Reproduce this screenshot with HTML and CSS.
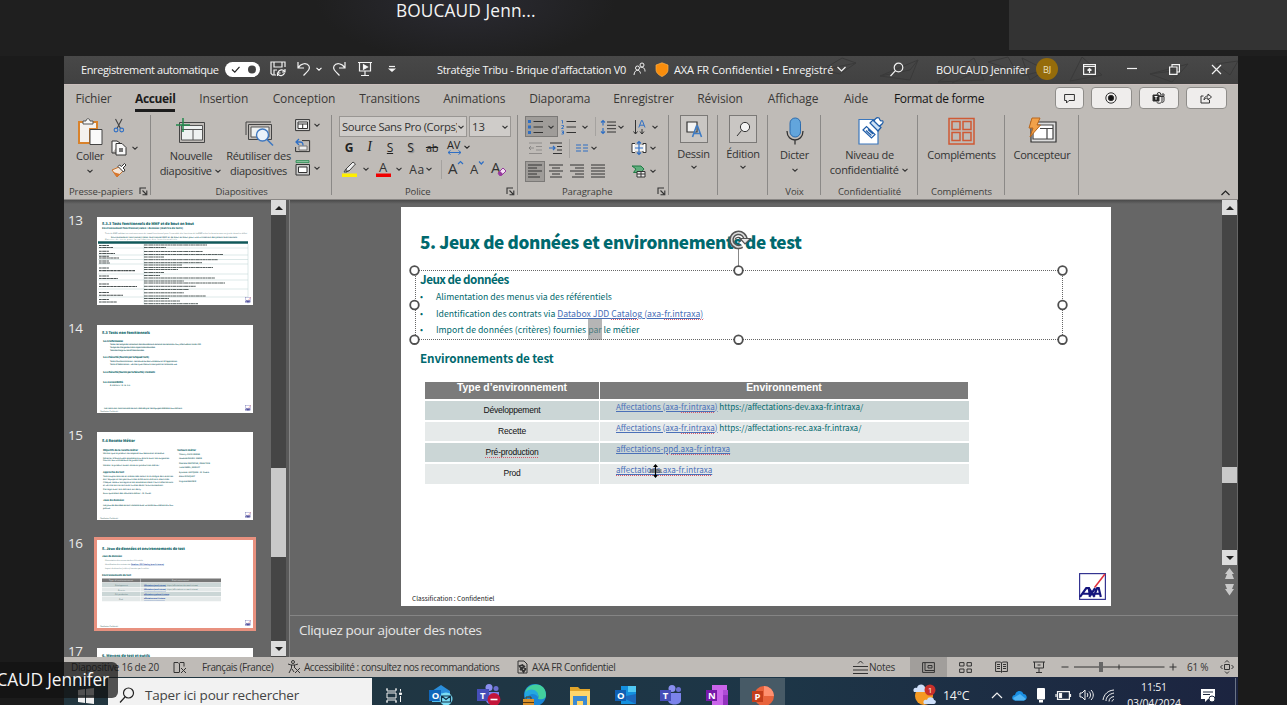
FILE: index.html
```html
<!DOCTYPE html>
<html lang="fr">
<head>
<meta charset="utf-8">
<title>Stratégie Tribu - Brique d'affactation V0</title>
<link rel="stylesheet" href="styles.css">
</head>
<body>
<svg class="defs" width="0" height="0">
  <symbol id="chev" viewBox="0 0 8 8"><path d="M1.5 2.8 4 5.2 6.5 2.8" fill="none" stroke="currentColor" stroke-width="1.1"/></symbol>
  <symbol id="launch" viewBox="0 0 9 9"><path d="M1 7V1h6M3.5 3.5 7 7M7.8 3.5v4.3H3.5" fill="none" stroke="#333" stroke-width="1.1"/></symbol>
  <symbol id="axa" viewBox="0 0 26 26"><rect x=".6" y=".6" width="24.8" height="24.8" fill="#fff" stroke="#2b2b8c" stroke-width="1.1"/><path d="M25 1 15 14" stroke="#e0303c" stroke-width="1.5"/><path d="M1 23 7 14.500h2.500L10.500 23M4 20h6M9.500 14.500 15 23M15.500 14.500 10 23M14 23l3.500-8.500H19L21 23M15 20h5.500" fill="none" stroke="#14147c" stroke-width="2.100"/></symbol>
</svg>

<header class="call"><div class="call-name">BOUCAUD Jenn...</div><div class="call-tile"></div></header>

<div class="app">
  <div class="titlebar">
    <svg class="pattern" viewBox="0 0 420 28"><path d="M2 14 22 2l14 5-16 11zM2 14l34-7M60 20 98 4 90 24zM60 20l30-6 8-10M118 26l36-24 10 22zM132 27l32-15M168 6l20-5 8 14zM202 2l24 12-16 10zM226 14l-24 6M250 25l12-24 20 18zM330 18l38-10-16 18zM330 18l30-4M396 8l22-3-8 14z" fill="none" stroke="#3a3a3a"/></svg>
    <span class="t-auto">Enregistrement automatique</span>
    <svg width="35" height="15" viewBox="0 0 35 15"><rect width="35" height="15" rx="7.500" fill="#fff"/><path d="m7 7.500 2.800 2.700L14.500 4.800" fill="none" stroke="#222" stroke-width="1.200"/><circle cx="27" cy="7.500" r="4" fill="#444"/></svg>
    <svg width="16" height="16" viewBox="0 0 16 16" class="w"><path d="M6 14H2.500L1 12.500V1h14v5M4 1v5h8V1M4 14V9h3M15 8v3h-3M7.500 15v-3h3M8 11.500c1-3 5-3.500 6.500-1M14.500 12c-1 3-5 3.500-6.500 1"/></svg>
    <svg width="16" height="16" viewBox="0 0 16 16" class="w"><path d="M2 1v6h6M2.300 6.700C5 2 11 1.500 13 5c1.500 3-1 5-5.500 9.500"/></svg>
    <svg width="8" height="8" class="cw"><use href="#chev"/></svg>
    <svg width="16" height="16" viewBox="0 0 16 16" class="w"><path d="M14 1v6H8M13.700 6.700C11 2 5 1.500 3 5c-1.500 3 1 5 5.500 9.500"/></svg>
    <svg width="16" height="16" viewBox="0 0 16 16" class="w"><path d="M1 1.500h14M2.500 2v8h11V2M8 10v4.500M4 14.500h8"/><path d="m6.500 3.800 4 2.200-4 2.200z" fill="#fff"/></svg>
    <svg width="8" height="8" viewBox="0 0 8 8" class="w"><path d="M1 1.500h6"/><path d="m1.500 4 2.500 2.300L6.500 4z" fill="#fff"/></svg>
    <span></span>
    <span class="t-doc">Stratégie Tribu - Brique d'affactation V0</span>
    <svg width="13" height="14" viewBox="0 0 13 14" class="w thin"><circle cx="4.500" cy="6" r="2"/><path d="M1 13c.3-6 6-6 6.500-1.500"/><circle cx="9" cy="3" r="2"/><path d="M7.500 5.500C10 5 12 6 12 9.500"/></svg>
    <svg width="14" height="15" viewBox="0 0 14 15"><path d="M7 .8 13 3v4.500c0 3.500-3 5.700-6 7-3-1.300-6-3.500-6-7V3z" fill="#f98d0c" stroke="#fbb04c" stroke-width=".7"/></svg>
    <span class="t-conf">AXA FR Confidentiel • Enregistré</span>
    <svg width="11" height="8" viewBox="0 0 11 8" class="w"><path d="m1.500 2 4 4 4-4"/></svg>
    <span></span>
    <svg width="14" height="15" viewBox="0 0 14 15" class="w"><circle cx="8.500" cy="5.500" r="4.300"/><path d="m5.500 8.700-5 5.300"/></svg>
    <span></span>
    <span class="t-user">BOUCAUD Jennifer</span>
    <span class="avatar">BJ</span>
    <svg width="13" height="11" viewBox="0 0 13 11" class="w"><path d="M.6.600h11.800v9.800H.6zM1 2.500h11M6.500 9V4.500M4.500 6.500l2-2 2 2"/></svg>
    <svg width="10" height="4" viewBox="0 0 10 4" class="w"><path d="M0 1.500h10"/></svg>
    <svg width="11" height="11" viewBox="0 0 11 11" class="w"><path d="M.6 3h7.400v7.400H.6zM3 2.500V.600h7.400V8H8.500"/></svg>
    <svg width="11" height="11" viewBox="0 0 11 11" class="w"><path d="m1 1 9 9M10 1l-9 9"/></svg>
  </div>

  <nav class="tabs">
    <span>Fichier</span><span class="on"><b>Accueil</b></span><span>Insertion</span><span>Conception</span><span>Transitions</span><span>Animations</span><span>Diaporama</span><span>Enregistrer</span><span>Révision</span><span>Affichage</span><span>Aide</span><span class="fmt">Format de forme</span>
    <div class="tab-btns">
      <i class="tb s"><svg width="11" height="11" viewBox="0 0 11 11" class="k"><path d="M.6 1.500h9.800v6H5L2.500 10V7.500H.6z"/></svg></i>
      <i class="tb"><svg width="12" height="12" viewBox="0 0 12 12" class="k"><circle cx="6" cy="6" r="5.200"/><circle cx="6" cy="6" r="2.700" fill="#111"/></svg></i>
      <i class="tb"><svg width="13" height="12" viewBox="0 0 13 12" class="k"><circle cx="7" cy="2.300" r="1.800"/><circle cx="11" cy="3" r="1.200"/><path d="M8 4.500h4v4c0 2-2 2-2 2M6 4.500h4V9c0 2.500-4 3-5.500 1"/><path d="M1 3h6v6H1z" fill="#222"/><path d="M2.500 4.500h3M4 4.500v3.300" stroke="#fff"/></svg></i>
      <i class="tb"><svg width="12" height="12" viewBox="0 0 12 12" class="k"><path d="M3.500 4H1v7h8.500V8M4 8c0-3 2-4 4-4V2l3.500 3L8 8V6C6 6 5 6.500 4 8z"/></svg></i>
    </div>
  </nav>

  <div class="ribbon">
    <section class="g g-clip">
      <div class="body">
        <div class="big"><svg width="26" height="28" viewBox="0 0 26 28"><path d="M2 4h18v7h-7v14H2z" fill="#f4f1ee" stroke="#d9822b" stroke-width="2"/><path d="M6 6V3h3c0-3 4-3 4 0h3v3z" fill="#f6f6f6" stroke="#555"/><path d="M13 11.500h12v15H13z" fill="#fafafa" stroke="#444"/></svg><span>Coller</span><svg width="8" height="8"><use href="#chev"/></svg></div>
        <div class="col c3">
          <svg class="cut" width="12" height="15" viewBox="0 0 12 15"><path d="m2.500 1 5 9.500M9 1 4 10.500" stroke="#444" stroke-width="1.100" fill="none"/><circle cx="3" cy="12" r="1.900" fill="none" stroke="#2f6fc4" stroke-width="1.100"/><circle cx="8.700" cy="12" r="1.900" fill="none" stroke="#2f6fc4" stroke-width="1.100"/></svg>
          <span class="rw"><svg width="16" height="16" viewBox="0 0 16 16"><path d="M1 13V1h5l3 2M1 13h4M5 3.500h6l4 4V15H5z" fill="#f8f8f8" stroke="#333"/><path d="M8 8h4v4H8z" fill="#777"/></svg><svg width="8" height="8"><use href="#chev"/></svg></span>
          <svg width="16" height="15" viewBox="0 0 16 15"><path d="m1 7 5 7 6-6-4-4z" fill="#f5e6d8" stroke="#c9722a"/><path d="m2 9 4 5 3-3z" fill="#d9762b"/><path d="m7 3.500 5.500 5.500 1.500-2-2-2 3-3-1.500-1.500-3 3-2-1.500z" fill="#fff" stroke="#333"/></svg>
        </div>
      </div>
      <footer>Presse-papiers<svg width="9" height="9"><use href="#launch"/></svg></footer>
    </section>
    <section class="g g-slides">
      <div class="body">
        <div class="big"><svg width="30" height="28" viewBox="0 0 30 28"><path d="M3.500 4.500h25v20h-25z" fill="none" stroke="#444"/><path d="M5.500 7.500h21v14.500h-21z" fill="#eef1f1" stroke="#555"/><path d="M5.500 11.500h21M17 11.500v10.500" stroke="#555"/><path d="M7 0v14M0 7h14" stroke="#23894d" stroke-width="1.500"/></svg><span>Nouvelle<br>diapositive <svg width="8" height="8"><use href="#chev"/></svg></span></div>
        <div class="big"><svg width="30" height="28" viewBox="0 0 30 28"><path d="M2 17V4h25M4.500 6.500h23v15h-23z" fill="none" stroke="#444"/><path d="M7 9h18v10H7z" fill="#eef1f1" stroke="#555"/><circle cx="18.500" cy="17" r="6" fill="#eaf2fa" stroke="#3f78c0" stroke-width="1.400"/><path d="m23 21.500 6 6" stroke="#3f78c0" stroke-width="1.600"/></svg><span>Réutiliser des<br>diapositives</span></div>
        <div class="col c3">
          <span class="rw"><svg width="16" height="14" viewBox="0 0 16 14"><path d="M.6 1.600h14v11h-14z" fill="#ddd" stroke="#333"/><path d="M3 4h9.500v6.500H3zM3 6h9.500M7.700 6v4.500" fill="#fff" stroke="#333"/></svg><svg width="8" height="8"><use href="#chev"/></svg></span>
          <svg width="16" height="14" viewBox="0 0 16 14"><path d="M7 1.600h7.600v11h-14V8" fill="none" stroke="#333"/><path d="M4 7h8v4H4z" fill="#eee" stroke="#777"/><path d="M4 0 1 3l3 3M1 3h4c2.500 0 3 1.500 3 3.500" fill="none" stroke="#2f6fc4" stroke-width="1.300"/></svg>
          <span class="rw"><svg width="16" height="16" viewBox="0 0 16 16"><path d="M1 .6h13v2H1z" fill="#8fc5a3" stroke="#23894d" stroke-width=".8"/><path d="M1 4.500h13.500v10.500H1z" fill="#ccc" stroke="#333"/><path d="M3.500 7h8.500v5.500H3.500z" fill="#fff" stroke="#333"/></svg><svg width="8" height="8"><use href="#chev"/></svg></span>
        </div>
      </div>
      <footer>Diapositives</footer>
    </section>
    <section class="g g-font">
      <div class="boxes"><span class="box"><em>Source Sans Pro (Corps)</em><svg width="8" height="8"><use href="#chev"/></svg></span><span class="box"><em>13</em><svg width="8" height="8"><use href="#chev"/></svg></span></div>
      <div class="f2"><b>G</b><i class="it">I</i><u>S</u><span class="sh">S</span><s>ab</s><span class="rw"><svg width="15" height="16" viewBox="0 0 15 16"><text x="0" y="10" class="av">AV</text><path d="M1 13.500h13M3.500 11.500l-2.500 2 2.500 2M11.500 11.500l2.500 2-2.500 2" fill="none" stroke="#2f6fc4"/></svg><svg width="8" height="8"><use href="#chev"/></svg></span></div>
      <div class="f3">
        <svg width="15" height="16" viewBox="0 0 15 16"><path d="m4 8 7-7 2.500 2L7 10l-3 .5zM4 8l-2 3h3l1.500-1.500" fill="#eee" stroke="#444"/><path d="M0 12.500h15V16H0z" fill="#ffef00"/></svg><svg width="8" height="8"><use href="#chev"/></svg>
        <svg width="15" height="16" viewBox="0 0 15 16"><text x="3" y="11" class="ga">A</text><path d="M0 12.500h15V16H0z" fill="#f00000"/></svg><svg width="8" height="8"><use href="#chev"/></svg>
        <span class="aa">Aa<svg width="8" height="8"><use href="#chev"/></svg></span><i class="vs"></i>
        <svg width="15" height="16" viewBox="0 0 15 16"><text x="0" y="13" class="gl">A</text><path d="m10 3 2.500-2.500L15 3" fill="none" stroke="#2f6fc4" stroke-width="1.200"/></svg>
        <svg width="15" height="16" viewBox="0 0 15 16"><text x="1" y="13" class="gm">A</text><path d="m10 .5 2.300 2.500 2.300-2.500" fill="none" stroke="#2f6fc4" stroke-width="1.200"/></svg>
        <svg width="16" height="16" viewBox="0 0 16 16"><text x="0" y="12" class="gl">A</text><path d="m7 12 5-5 3 3-4.500 4.500H8.500z" fill="#f2dcf2" stroke="#963a9c"/><path d="m7 12 2-2 3 3-1.500 1.500h-2z" fill="#963a9c"/></svg>
      </div>
      <footer>Police<svg width="9" height="9"><use href="#launch"/></svg></footer>
    </section>
    <section class="g g-para">
      <div class="p1">
        <span class="hl"><svg width="15" height="16" viewBox="0 0 15 16"><path d="M5.500 2.500H15M5.500 8H15M5.500 13.500H15" stroke="#333" stroke-width="1.100"/><path d="M0 1h3v3H0zM0 6.500h3v3H0zM0 12h3v3H0z" fill="#2f6fc4"/></svg><svg width="8" height="8"><use href="#chev"/></svg></span>
        <svg width="15" height="16" viewBox="0 0 15 16"><path d="M5.500 2.500H15M5.500 8H15M5.500 13.500H15" stroke="#333"/><path d="M.5 1.500h1v3M.5 6.500h2v1.500L.5 9.500h2M.5 12h2v3h-2M1 13.500h1.500" fill="none" stroke="#2f6fc4" stroke-width=".9"/></svg><svg width="8" height="8"><use href="#chev"/></svg><i class="vs"></i>
        <svg width="16" height="16" viewBox="0 0 16 16"><path d="M7 3h9M7 6.300h9M7 9.700h9M7 13h9" stroke="#333"/><path d="M3 1.500v5M1 3.500l2-2 2 2M3 9v5.500M1 12.500l2 2 2-2" fill="none" stroke="#2f6fc4" stroke-width="1.200"/></svg><svg width="8" height="8"><use href="#chev"/></svg>
        <svg width="13" height="16" viewBox="0 0 13 16"><path d="M2.500 1v14M.5 12.500l2 2.500 2-2.500M9 10v5M7 12.500l2 2.500 2-2.500" fill="none" stroke="#333"/><path d="m5.800 8.500 2.700-7h.8l2.700 7M6.800 6.200h4.200" fill="none" stroke="#2f6fc4"/></svg><svg width="8" height="8"><use href="#chev"/></svg>
      </div>
      <div class="p2">
        <svg width="15" height="12" viewBox="0 0 15 12" opacity=".45"><path d="M1 1h13M8 4.500h6M8 8h6M1 11.500h13M6 6H1M3 4 1 6l2 2" fill="none" stroke="#555"/></svg>
        <svg width="14" height="12" viewBox="0 0 14 12"><path d="M1 1h12M8 4.500h5M8 8h5M4 11.500h9" stroke="#333"/><path d="M0 6h6M4 4l2 2-2 2" fill="none" stroke="#2f6fc4" stroke-width="1.200"/></svg><i class="vs"></i>
        <svg width="12" height="8" viewBox="0 0 12 8"><path d="M0 1h5M7 1h5M0 4h5M7 4h5M0 7h5M7 7h5" stroke="#2f6fc4" stroke-width="1.200"/></svg><svg width="8" height="8"><use href="#chev"/></svg><span></span>
        <svg width="16" height="14" viewBox="0 0 16 14"><path d="M4 2.500H1v9h3M12 2.500h3v9h-3z" fill="#fff" stroke="#333"/><path d="M3 4h10v6H3z" fill="#eee"/><path d="M8 0v14M6 2.500 8 .5l2 2M6 11.500l2 2 2-2M4 7h8" fill="none" stroke="#2f6fc4" stroke-width="1.200"/></svg><svg width="8" height="8"><use href="#chev"/></svg>
      </div>
      <div class="p3">
        <span class="hl"><svg width="14" height="14" viewBox="0 0 14 14" class="k"><path d="M0 1h14M0 4h9M0 7h14M0 10h9M0 13h12"/></svg></span>
        <svg width="14" height="14" viewBox="0 0 14 14" class="k"><path d="M0 1h14M3 4h8M0 7h14M3 10h8M1 13h12"/></svg>
        <svg width="14" height="14" viewBox="0 0 14 14" class="k"><path d="M0 1h14M5 4h9M0 7h14M5 10h9M2 13h12"/></svg>
        <svg width="14" height="14" viewBox="0 0 14 14" class="k"><path d="M0 1h14M0 4h14M0 7h14M0 10h14M0 13h14"/></svg><span></span>
        <svg width="16" height="13" viewBox="0 0 16 13"><path d="M1 1h9l3 3-3 3.500H2.500L5 4z" fill="#5fae7d" stroke="#1f7a44"/><path d="M6 6.500h8V12H6z" fill="#eee" stroke="#333"/><path d="M6 9h8M10 6.500V12" stroke="#333"/></svg><svg width="8" height="8"><use href="#chev"/></svg>
      </div>
      <footer>Paragraphe<svg width="9" height="9"><use href="#launch"/></svg></footer>
    </section>
    <section class="g g-box"><div class="sq"><svg width="16" height="17" viewBox="0 0 16 17"><path d="M1 1h10v10H1z" fill="#f3f3f3" stroke="#333" stroke-width="1.200"/><path d="m6.500 16 4-11h1l4 11M8 12.500h6" fill="none" stroke="#3f7cc4" stroke-width="1.600"/></svg></div><span>Dessin</span><svg width="8" height="8"><use href="#chev"/></svg></section>
    <section class="g g-box"><div class="sq"><svg width="15" height="16" viewBox="0 0 15 16" class="k"><circle cx="9" cy="6" r="4.600" fill="#f3f3f3"/><path d="M5.500 9.500 1 15"/></svg></div><span>Édition</span><svg width="8" height="8"><use href="#chev"/></svg></section>
    <section class="g g-one"><div class="big"><svg width="20" height="28" viewBox="0 0 20 28"><path d="M2 14c0 12 16 12 16 0M10 23v4.500" fill="none" stroke="#333" stroke-width="1.300"/><rect x="5" y="1" width="10.500" height="19" rx="5.200" fill="#62a5dc" stroke="#2c6cae"/></svg><span>Dicter</span><svg width="8" height="8"><use href="#chev"/></svg></div><footer>Voix</footer></section>
    <section class="g g-one"><div class="big"><svg width="28" height="28" viewBox="0 0 28 28"><path d="M3 2.500h19v24.500H3z" fill="#fff" stroke="#3b77bd" stroke-width="1.200"/><path d="m7 13 3.500-3.500 8.500 8L15.500 21zM10 13.500l5.500 5M12 12.500l5 4.500" fill="#fff" stroke="#1f5da8" stroke-width="1.200"/><path d="m14 6 3-3 8 7.500-3 3.500z" fill="#cfe2f5" stroke="#1f5da8" stroke-width="1.200"/><path d="M18 4c1-2 3-4 5-3 1 1 0 2 2 3 2-1 3 1 1 3-1 1-2 2-3 2z" fill="#fff" stroke="#1f5da8" stroke-width="1.200"/></svg><span>Niveau de<br>confidentialité <svg width="8" height="8"><use href="#chev"/></svg></span></div><footer>Confidentialité</footer></section>
    <section class="g g-one"><div class="big"><svg width="27" height="28" viewBox="0 0 27 28"><path d="M1 1.500h25v25.500H1zM4 4.500h8v8H4zM15 4.500h8v8h-8zM4 15.500h8v8H4zM15 15.500h8v8h-8z" fill="none" stroke="#cf5a35" stroke-width="1.500"/></svg><span>Compléments</span></div><footer>Compléments</footer></section>
    <section class="g g-one"><div class="big"><svg width="29" height="28" viewBox="0 0 29 28"><path d="M3 5h25v20H3z" fill="#ddd" stroke="#333" stroke-width="1.200"/><path d="M5 8h20v14H5zM12 11.500h13M19 11.500V22" fill="#fff" stroke="#444" stroke-width="1.200"/><path d="M4 1h8L9 8h3.500L2 20l3-9H1z" fill="#f1a14a" stroke="#b9661c"/></svg><span>Concepteur</span></div></section>
    <svg class="collapse" width="11" height="8" viewBox="0 0 11 8"><path d="m1.500 6 4-4 4 4" fill="none" stroke="#222" stroke-width="1.200"/></svg>
  </div>

  <div class="work">
    <aside class="thumbs">
      <div class="row"><span>13</span><svg class="th" viewBox="0 0 156 88">
        <text x="5" y="7.500" class="h" textLength="92">5.3.3 Tests fonctionnels de MMF et de bout en bout</text>
        <text x="5" y="11.500" class="sb" textLength="81">Environnement fonctionnel/Jalon : données (matrice de tests)</text>
        <text x="8" y="16.500" class="m" textLength="142">Tests de MMF validant un environnement de travail fonctionnel pour l'ensemble des fonctions de la MMF selon les besoins avec un jeu de données défini</text>
        <text x="14" y="20.500" class="mb" textLength="126">Environnement fonctionnel/Jalon fonctionnel MMF et de bout en bout pour une utilisation des jalons fonctionnels</text>
        <text x="8" y="23" class="m" textLength="72">Matrice de tests pour la validation des fonctionnalités</text>
        <path d="M1 24.200h150v2.500H1z" fill="#10585a"/>
        <path d="M1 31h150M1 38h150M1 42.500h150M1 47h150M1 57h150M1 63h150M1 72h150M1 80h150" stroke="#b9d0d0" stroke-width=".5"/>
        <path d="M47 27v60M151 27v60" stroke="#b9d0d0" stroke-width=".5"/>
        <path d="M2 28.500h10M2 30.500h14M2 34.300h10M2 36.500h16M2 39.300h10M2 41h20M2 44h10M2 46h11M2 51h10M2 53.600h36M2 59h10M2 61.500h19M2 67h10M2 69.500h38M2 75.500h10M2 78.300h24M2 82.500h10M2 85h18" stroke="#4a5252" stroke-width="1.100" stroke-dasharray="2.500 .3 1 .2 3 .4"/>
        <path d="M47 28h63M47 30.500h22M47 34.500h59M47 37.500h79M47 40h20M47 42.700h74M47 45.700h58M47 48h38M47 50.500h69M47 52.500h34M47 55.500h20M47 58.500h16M47 61h71M47 64h40M47 66h81M47 69.300h52M47 72.500h45M47 75.800h40M47 79h62M47 81.500h25M47 84h36M47 86.700h54" stroke="#56605f" stroke-width="1" stroke-dasharray="3 .3 1.400 .3 4 .4 2 .3"/>
        <use href="#axa" x="148" y="80" width="6" height="6"/></svg></div>
      <div class="row"><span>14</span><svg class="th" viewBox="0 0 156 88">
        <text x="5" y="9" class="h" textLength="48">5.3 Tests non fonctionnels</text>
        <text x="6" y="16.500" class="sb" textLength="20">5.3.1 Performances</text>
        <text x="13" y="19.500" class="mb" textLength="91">Tester les temps de traitement des données entrantes et sortantes du flux, effectués en fin de JDD</text>
        <text x="13" y="22.500" class="mb" textLength="45">Temps de chargement des impacts des données</text>
        <text x="13" y="26" class="mb" textLength="34">Tests de charge sur les API des données</text>
        <text x="6" y="33" class="sb" textLength="46">5.3.2 Sécurité (fournis par la Squad Tech)</text>
        <text x="13" y="36.500" class="mb" textLength="67">Tests d'authentification : tentatives au bon utilisateur et à l'application</text>
        <text x="13" y="39.500" class="mb" textLength="67">Tests d'habilitation : vérifier que chacun a son profil et la bonne vue</text>
        <text x="6" y="47.500" class="sb" textLength="52">5.3.3 Sécurité (fournis par la Sécurité) : Pentests</text>
        <text x="6" y="58" class="sb" textLength="20">5.3.4 Accessibilité</text>
        <text x="13" y="61" class="mb" textLength="20">À définir à la fin</text>
        <text x="7" y="84" class="mb" textLength="78">Les tests non fonctionnels seront réalisés par les équipes dédiées aux métiers</text>
        <text x="3" y="87.300" class="m" textLength="18">Classification : Confidentiel</text>
        <use href="#axa" x="148" y="80" width="6" height="6"/></svg></div>
      <div class="row"><span>15</span><svg class="th" viewBox="0 0 156 88">
        <text x="5" y="9.500" class="h" textLength="33">5.4 Recette Métier</text>
        <text x="6" y="18.500" class="sb" textLength="35">Objectifs de la recette Métier</text><text x="80" y="18.500" class="sb" textLength="19">Testeurs métier</text>
        <g class="mb"><text x="6" y="22" textLength="61">Vérifier que le produit correspond aux besoins et attendus</text><text x="6" y="26.500" textLength="66">Détecter d'éventuels anomalies ou écarts avec les exigences</text><text x="6" y="29" textLength="40">Fournir aux utilisateurs le guide final</text><text x="6" y="33.500" textLength="56">Valider le produit avant mise en production métier</text>
        <text x="82" y="23" textLength="21">Thierry GUYE-BERNE</text><text x="82" y="27" textLength="23">Laurence DULIEU - MAGIE</text><text x="82" y="31.500" textLength="31">Pascale DESTEPHE, BEAUTEIN</text><text x="82" y="36" textLength="21">Julie GAREL, MERLOT</text><text x="82" y="40.500" textLength="30">Sylvaine JAYCQUES - M. Duero</text><text x="82" y="45" textLength="16">Alain BOUQUET</text><text x="82" y="49.500" textLength="17">Virginie MAUDER</text>
        <text x="6" y="45" textLength="70">Tests exploratoires et scénarisés selon la stratégie des recettes</text><text x="6" y="47.500" textLength="66">de l'équipe et les parcours des différents métiers identifiés</text><text x="6" y="51" textLength="70">Chaque testeur enregistre les anomalies dans l'outil affectations</text><text x="6" y="53.500" textLength="60">et vérifie les corrections livrées dans l'environnement</text><text x="6" y="58" textLength="38">Partage avec les métiers en daily</text><text x="6" y="61.500" textLength="48">Suivi quotidien des résultats métier - M. Durel</text><text x="6" y="73.500" textLength="70">Les jeux de données seront transmis avec un accès aux métiers du flux</text><text x="6" y="76.500" textLength="7">prévus</text></g>
        <text x="6" y="40.500" class="sb" textLength="21">Approche de test</text><text x="6" y="69" class="sb" textLength="21">Jeux de données</text>
        <text x="3" y="87.300" class="m" textLength="18">Classification : Confidentiel</text>
        <use href="#axa" x="148" y="80" width="6" height="6"/></svg></div>
      <div class="row sel"><span>16</span><svg class="th" viewBox="0 0 156 88">
        <text x="5" y="9.500" class="h" textLength="83">5. Jeux de données et environnements de test</text>
        <text x="5" y="17" class="sb" textLength="20">Jeux de données</text>
        <g class="m"><text x="8" y="21" textLength="38">Alimentation des menus via des référentiels</text><text x="8" y="24.700" textLength="25">Identification des contrats via</text><text x="34" y="24.700" class="l" textLength="33">Databox JDD Catalog (axa-fr.intraxa)</text><text x="8" y="28.500" textLength="44">Import de données (critères) fournies par le métier</text></g>
        <text x="5" y="35.500" class="sb" textLength="29">Environnements de test</text>
        <path d="M5 38.500h119v3.800H5z" fill="#777"/><path d="M5 42.800h119v4.200H5zM5 52h119v4H5z" fill="#cbd6d6"/><path d="M5 47.500h119v4H5zM5 56.500h119v4.700H5z" fill="#e3e8e8"/><path d="M43.500 38.500v23" stroke="#fff" stroke-width=".4"/>
        <g class="m"><text x="12" y="41.200" class="wt" textLength="24">Type d'environnement</text><text x="75" y="41.200" class="wt" textLength="17">Environnement</text><text x="18" y="46" textLength="13">Développement</text><text x="21" y="50.800" textLength="7">Recette</text><text x="18" y="55" textLength="13">Pré-production</text><text x="22" y="59.700" textLength="4">Prod</text><text x="47" y="45.500" class="l" textLength="22">Affectations (axa-fr.intraxa)</text><text x="70" y="45.500" textLength="31">https://affectations-dev.axa-fr.intraxa/</text><text x="47" y="50.200" class="l" textLength="22">Affectations (axa-fr.intraxa)</text><text x="70" y="50.200" textLength="31">https://affectations-rec.axa-fr.intraxa/</text><text x="47" y="54.700" class="l" textLength="25">affectations-ppd.axa-fr.intraxa</text><text x="47" y="59.400" class="l" textLength="21">affectations.axa-fr.intraxa</text>
        <text x="3" y="87.300" textLength="18">Classification : Confidentiel</text></g>
        <use href="#axa" x="148" y="80" width="6" height="6"/></svg></div>
      <div class="row"><span>17</span><svg class="th" viewBox="0 0 156 88"><text x="5" y="9" class="h" textLength="48">6. Moyens de test et outils</text></svg></div>
    </aside>
    <div class="sb1"><i class="ar up"></i><i class="thumb"></i><i class="ar dn"></i></div>
    <div class="split"></div>
    <main>
      <div class="stage">
        <article class="slide">
          <h1>5. Jeux de données et environnements de test</h1>
          <h2 class="jeux">Jeux de données</h2>
          <ul>
            <li>Alimentation des menus via des référentiels</li>
            <li>Identification des contrats via <a>Databox JDD <span class="sp">Catalog</span> (axa-<span class="sp">fr.intraxa)</span></a></li>
            <li>Import de données (critères) fournies <mark>par</mark> le métier</li>
          </ul>
          <h2 class="env">Environnements de test</h2>
          <table>
            <colgroup><col class="ca"><col></colgroup>
            <tr><th>Type d’environnement</th><th>Environnement</th></tr>
            <tr class="d"><td>Développement</td><td><a>Affectations (axa-<span class="sp">fr.intraxa</span>)</a> https://affectations-dev.axa-fr.intraxa/</td></tr>
            <tr><td>Recette</td><td><a>Affectations (axa-<span class="sp">fr.intraxa</span>)</a> https://affectations-rec.axa-fr.intraxa/</td></tr>
            <tr class="d"><td><span class="sp">Pré-production</span></td><td><a>affectations-<span class="sp">ppd.axa-fr.intraxa</span></a></td></tr>
            <tr><td>Prod</td><td><a><span class="sp">affectations.axa-fr.intraxa</span></a></td></tr>
          </table>
          <div class="class">Classification : Confidentiel</div>
          <svg class="logo" width="27" height="27"><use href="#axa"/></svg>
          <svg class="selbox" width="660" height="120" viewBox="408 228 660 120">
            <path d="M415 270.500h648M415 339.500h648M415.500 270v70M1062.500 270v70" fill="none" stroke="#666" stroke-width="1" stroke-dasharray="1 1"/>
            <path d="M738.500 248v18" stroke="#888"/>
            <g fill="#fff" stroke="#4f4f4f" stroke-width="1.800"><circle cx="414.500" cy="270.500" r="4.300"/><circle cx="738.500" cy="270.500" r="4.300"/><circle cx="1062.500" cy="270.500" r="4.300"/><circle cx="414.500" cy="305" r="4.300"/><circle cx="1062.500" cy="305" r="4.300"/><circle cx="414.500" cy="339.700" r="4.300"/><circle cx="738.500" cy="339.700" r="4.300"/><circle cx="1062.500" cy="339.700" r="4.300"/></g>
            <path d="M745.500 240a7 7 0 1 0-3.500 6" fill="none" stroke="#555" stroke-width="4.600"/><path d="M745.500 240a7 7 0 1 0-3.500 6" fill="none" stroke="#ddd" stroke-width="1.600"/>
            <path d="M740 238.500h10.500L745 244z" fill="#e9e9e9" stroke="#555" stroke-width="1.200"/><path d="M735 239.500c1-3 6-3 6 1l-2.500 2" fill="none" stroke="#555" stroke-width="1.300"/>
          </svg>
          <svg class="cursor" width="13" height="14" viewBox="0 0 13 14"><path d="M.5 6h12M.5 8h12" stroke="#333"/><path d="M6.500 1v12" stroke="#000" stroke-width="1.200"/><path d="m4 3 2.500-3L9 3zM4 11l2.500 3L9 11z"/></svg>
        </article>
        <div class="sb2"><i class="ar up"></i><i class="thumb"></i><i class="ar dn"></i><svg width="11" height="30" viewBox="0 0 11 30"><path d="M5.500 1 10 7H8l2 5H1l2-5H1zM5.500 28.500 10 22H8l2-5H1l2 5H1z" fill="#c9c9c9"/></svg></div>
      </div>
      <div class="notes">Cliquez pour ajouter des notes</div>
    </main>
  </div>

  <div class="status">
    <span>Diapositive 16 de 20</span>
    <svg width="14" height="13" viewBox="0 0 14 13" class="k"><path d="M6 11.500H1v-10h4l1 1 1-1h4v4M6.500 2.500v9M8 7l5 5M13 7l-5 5"/></svg>
    <span class="s2">Français (France)</span>
    <svg width="14" height="14" viewBox="0 0 14 14" class="k"><circle cx="6" cy="2" r="1.500"/><path d="M1 4c4 1.500 6 1.500 10 0M4.500 5v3L2 13M7.500 5v3M5 9l2 3M8 8l5 5M13 8l-5 5"/></svg>
    <span class="s3">Accessibilité : consultez nos recommandations</span>
    <svg width="11" height="14" viewBox="0 0 11 14" class="k"><path d="M1 1h6l3 3v9H1z"/><path d="m2.500 6 3-1 3 4-2 3zM3 10l5-4" stroke-width="1.800"/></svg>
    <span class="s4">AXA FR Confidentiel</span>
    <span></span>
    <svg width="15" height="15" viewBox="0 0 15 15" class="k"><path d="m5 3.500 2.500-2.500L10 3.500M0 6.500h15M0 10h15M0 13.500h15"/></svg>
    <span>Notes</span><span></span>
    <span class="cur"><svg width="13" height="11" viewBox="0 0 13 11" class="k"><path d="M.6.600h11.800v9.800H.6zM3 .6v7.900M3 8.500h9M6 3.500h4v2.500H6z"/></svg></span>
    <svg width="13" height="11" viewBox="0 0 13 11" class="k"><path d="M.6.600h4.400v3.400H.6zM8 .6h4.400v3.400H8zM.6 7h4.400v3.400H.6zM8 7h4.400v3.400H8z"/></svg>
    <svg width="13" height="12" viewBox="0 0 13 12" class="k"><path d="M.6 1h4.900l1 1 1-1h4.900v9.500H7.500l-1 1-1-1H.6zM6.500 2v9M2 3.500h3M2 5.500h3M2 7.500h3M8 3.500h3M8 5.500h3M8 7.500h3"/></svg>
    <svg width="12" height="12" viewBox="0 0 12 12" class="k"><path d="M0 1h12M1.500 1v6h9V1M6 7v4M3 11.500h6M4.500 4h3"/></svg>
    <svg class="zoom" width="120" height="14" viewBox="0 0 120 14"><path d="M4.500 7h7M17 7h90.500M62 4.500v5M112.500 7h7M116 3.500v7" stroke="#333"/><path d="M42 2h4v10h-4z" fill="#666"/></svg>
    <span>61 %</span>
    <svg width="14" height="14" viewBox="0 0 14 14" class="k"><path d="M4.500 4.500h5v5h-5zM5 2.500l2-2 2 2M5 11.500l2 2 2-2M2.500 5l-2 2 2 2M11.500 5l2 2-2 2"/></svg>
  </div>

  <div class="taskbar">
    <span class="start"><svg width="16" height="16" viewBox="0 0 16 16"><path d="M0 2 7 1v6.500H0zM8 .9 16 0v7.500H8zM0 8.500h7V15l-7-1zM8 8.500h8V16l-8-1z" fill="#f0f0f0"/></svg></span>
    <span class="search"><svg width="16" height="16" viewBox="0 0 16 16"><circle cx="9.500" cy="6" r="5" fill="none" stroke="#222" stroke-width="1.200"/><path d="m6 10-5 5.500" stroke="#222" stroke-width="1.200"/></svg><em>Taper ici pour rechercher</em></span>
    <svg width="16" height="15" viewBox="0 0 16 15" class="w thin"><path d="M0 1h2M9 1h2M0 14h2M9 14h2M1 1v2h9V1M1 14v-2h9v2M1 5h9v5H1zM14.500 1v2.500M14.500 8v6"/><path d="M13.500 5h2v1.500h-2z" fill="#fff"/></svg>
    <svg width="24" height="22" viewBox="0 0 24 22"><path d="M3 7 12 1l9 6v11H3z" fill="#2a8edb"/><path d="M3 9h18v9H3z" fill="#52c0f0"/><path d="M0 6h12v11H0z" fill="#0f66ba"/><text x="2.800" y="14.500" class="ic">O</text><circle cx="17" cy="15" r="6.500" fill="#7adcf5"/><path d="M12.500 12h9v6h-9zM12.500 12l4.500 3.500 4.500-3.500" fill="none" stroke="#12324a" stroke-width="1.200"/></svg>
    <svg width="24" height="22" viewBox="0 0 24 22"><circle cx="12" cy="3.500" r="3.500" fill="#8a8ff0"/><circle cx="19" cy="4.500" r="2.500" fill="#6a6fd0"/><path d="M9 8h13v8c0 6-13 6-13 0z" fill="#7b83eb"/><path d="M0 5h12v12H0z" fill="#464eb8"/><text x="3" y="14.500" class="ic">T</text><circle cx="17" cy="15.500" r="6.500" fill="#c4153a"/><path d="M13.500 15.500h7" stroke="#fff" stroke-width="1.600"/></svg>
    <svg width="24" height="22" viewBox="0 0 24 22"><circle cx="13" cy="11" r="11" fill="#1a86d8"/><path d="M3 9C5-2 24-3 24 11c0 4-4 5-8 4 3-6-6-9-13-6z" fill="#43cf9d"/><path d="M3 9c5-7 15-2 13 4-3-4-9-5-13 4z" fill="#24a7e0"/><path d="M1 15h11v8H1z" fill="#d9902a"/><path d="M4 15v-2h5v2M1 18.500h11" fill="none" stroke="#593a10"/></svg>
    <svg width="22" height="20" viewBox="0 0 22 20"><path d="M1 2h8l2 2h10v4H1z" fill="#e2a52a"/><path d="M1 6h20v14H1z" fill="#ffd66b"/><path d="M4 11h14v9h-4v-4H8v4H4z" fill="#3c8ad2"/></svg>
    <svg width="22" height="20" viewBox="0 0 22 20"><path d="M6 1h15v18H6z" fill="#1490df"/><path d="M13 1h8v6h-8z" fill="#50c8f3"/><path d="m6 12 15 7V9z" fill="#1c69bd"/><path d="M0 5h11v11H0z" fill="#0f5fb4"/><text x="2" y="14" class="ic">O</text></svg>
    <svg width="22" height="20" viewBox="0 0 22 20"><circle cx="12" cy="3.500" r="3.500" fill="#8a8ff0"/><circle cx="18.500" cy="4.500" r="2.500" fill="#6a6fd0"/><path d="M8 8h13v7c0 6-13 6-13 0z" fill="#7b83eb"/><path d="M0 5h11v11H0z" fill="#464eb8"/><text x="2.800" y="14" class="ic">T</text></svg>
    <svg width="22" height="20" viewBox="0 0 22 20"><path d="M6 0h15v20H6z" fill="#ca64ea"/><path d="M17 5h5v5h-5z" fill="#ae4bd5"/><path d="M17 10h5v10h-5z" fill="#9332bf"/><path d="M0 5h11v11H0z" fill="#7719aa"/><text x="2" y="14" class="ic">N</text></svg>
    <span class="pp"><svg width="22" height="20" viewBox="0 0 22 20"><circle cx="12" cy="10" r="10" fill="#e8633c"/><path d="M12 0a10 10 0 0 1 10 10H12z" fill="#ff9070"/><path d="M0 5h11v11H0z" fill="#c43e1c"/><text x="2.500" y="14" class="ic">P</text></svg></span>
    <span></span>
    <svg width="24" height="22" viewBox="0 0 24 22"><circle cx="11" cy="12" r="9" fill="#f59a23"/><path d="M1 8c-2-4 2-5 3-4 1-5 8-4 8 0 3 0 2 4 0 4z" fill="#cfe0fa"/><path d="M11 20c-2-4 2-5 3-4 1-4 7-3 7 0 3 0 2 4 0 4z" fill="#cfe0fa"/><circle cx="17" cy="6" r="5.500" fill="#c8302b"/><text x="15" y="9" class="n1">1</text></svg>
    <span class="temp">14°C</span>
    <svg width="12" height="8" viewBox="0 0 12 8" class="w"><path d="m1 7 5-5 5 5"/></svg>
    <svg width="15" height="11" viewBox="0 0 15 11"><path d="M3 10.500C-1 10-.5 5 3 5 4 0 10-.5 11.500 4 15.500 4 16 10 12 10.500z" fill="#1a8fe3"/><path d="M1 8 8 4l6 5-2 1.500H3z" fill="#50b5f5"/></svg>
    <svg width="10" height="15" viewBox="0 0 10 15"><rect x="1" y="0" width="8" height="11.500" rx="1" fill="#fff"/><path d="M3 12h4v2.500H3z" fill="#fff"/></svg>
    <svg width="15" height="9" viewBox="0 0 15 9" class="w"><path d="M1.500.6h11.900v7.800H1.500zM0 3v3M14.500 3v3"/><path d="M3.500 2.500h2v4h-2z" fill="#fff"/></svg>
    <svg width="15" height="12" viewBox="0 0 15 12" class="w thin"><path d="M1 4h2l3-3v10L3 8H1zM8 4c1 1 1 3 0 4M10 2.500c2 2 2 5 0 7M12 1c3 3 3 7 0 10"/></svg>
    <svg width="13" height="13" viewBox="0 0 13 13" class="w thin"><path d="M1 11C2 5 6 1.500 12 1M4 12c0-4 3-7 8-8M7 12.500c0-3 2-4.500 5-5M10 12.500c0-1 1-2 2-2"/></svg>
    <span class="clock"><span>11:51</span><span>03/04/2024</span></span>
    <svg width="16" height="15" viewBox="0 0 16 15"><path d="M1 1h14v10H8l-3 3v-3H1z" fill="#fff"/><path d="M3 4h10M3 6.500h7" stroke="#1f2a40"/><circle cx="12" cy="11" r="3" fill="#fff" stroke="#1f2a40"/></svg>
    <i class="peek"></i>
  </div>
</div>

<div class="speaker">CAUD Jennifer</div>
</body>
</html>
```
FILE: styles.css
```css
*{box-sizing:border-box}
body{margin:0;width:1287px;height:705px;overflow:hidden;background:#1b1b1b;font-family:"Open Sans","Noto Sans",sans-serif;color:#333;position:relative}
svg{display:block;overflow:visible;flex:none}
i,em{font-style:normal}
.defs{position:absolute}
.w{fill:none;stroke:#f2f2f2;stroke-width:1.2}
.thin{stroke-width:1}
.k{fill:none;stroke:#333;stroke-width:1}
.call{height:56px;display:flex;justify-content:space-between;background:radial-gradient(ellipse 150px 62px at 466px 0,#2b2b33,#1f1f1f)}
.call-name{padding-left:396px;font-size:17.300px;line-height:22px;color:#f4f4f4;letter-spacing:.12px}
.call-tile{width:278px;height:50px;background:#333}
.app{width:1174px;height:649px;margin-left:64px;overflow:hidden;display:flex;flex-direction:column}

.titlebar{position:relative;height:28px;background:linear-gradient(#484848,#414141);display:grid;padding:0 0 2px 17px;grid-template-columns:144px 35px 36px 16px 14px 26px 26px 28px 31px 192px 20px 25px 160px 14px 34px 30px 24px 100px 22px 63px 22px 62px 23px;align-items:center;color:#f4f4f4;font-size:11px;white-space:nowrap}
.titlebar>svg{justify-self:center}
.titlebar>.pattern{position:absolute;left:756px;top:0;width:420px;height:28px}
.titlebar>*{position:relative}
.titlebar span{letter-spacing:-.2px}
.titlebar .t-auto{letter-spacing:-.4px}
.titlebar .t-doc{letter-spacing:-.3px}
.titlebar .t-conf{letter-spacing:-.1px}
.cw{color:#fff}
.titlebar .avatar{width:22px;height:22px;border-radius:50%;background:#956c0b;font-size:9px;display:flex;align-items:center;justify-content:center;color:#eee3c0}

.tabs{height:29px;background:#bfbbb7;display:grid;grid-template-columns:59px 64.5px 72.5px 88px 83px 86.5px 84.5px 83px 70px 76px 50px 116px 1fr;font-size:12px;letter-spacing:-.12px;border-top:1px solid #cbbfbd}
.tabs>span{text-align:center;line-height:28px;white-space:nowrap;color:#3a3836}
.tabs .on b{display:inline-block;line-height:20px;border-bottom:3px solid #1c1c1c;color:#1c1c1c;letter-spacing:-.35px}
.tabs .fmt{color:#141414;letter-spacing:-.3px}
.tab-btns{display:flex;gap:7px;padding:2px 0 0 58px}
.tb{width:40.500px;height:22px;border-radius:4px;background:#efedec;border:1px solid #8f8d8a;display:flex;align-items:center;justify-content:center}
.tb.s{width:29px}

.ribbon{position:relative;height:87px;background:#bfbbb7;border-bottom:1px solid #8a8785;display:flex;font-size:11px;letter-spacing:-.3px;flex:none}
.g{position:relative;display:flex;flex-direction:column;height:86px;padding-top:3px;flex:none}
.g::after{content:"";position:absolute;right:0;top:2px;width:1px;height:80px;background:#8b8987}
.g footer{margin-top:auto;height:15px;font-size:9.500px;letter-spacing:-.1px;line-height:13px;text-align:center;display:flex;justify-content:center;align-items:center;white-space:nowrap;color:#403e3c}
.g footer svg{margin-left:auto}
.body{display:flex}
.big{display:flex;flex-direction:column;align-items:center;text-align:center;line-height:14.500px;white-space:nowrap}
.big>span{margin-top:3px}
.big>span+svg{margin-top:3px}
.big span svg{display:inline-block}
.col{display:flex;flex-direction:column;align-items:flex-start}
.rw{display:flex;align-items:center;gap:4px}
.g-clip{width:87px}
.g-clip .body{padding:2px 0 0 11px;gap:6px}
.g-clip .big{width:30px}
.c3{gap:7px}
.cut{margin-left:2px}
.g-clip footer{padding:0 3px 0 5px}
.g-slides{width:181px}
.g-slides .body{padding:2px 0 0 8px}
.g-slides .big:nth-child(1){width:64px}
.g-slides .big:nth-child(2){width:71px}
.g-slides .col{padding-left:1px;gap:7px}
.g-slides .rw{gap:2px}
.g-font{width:186px;padding-left:7px}
.boxes{display:flex;gap:2px}
.box{width:128px;height:21px;background:#cfccc9;border:1px solid #999693;display:flex;align-items:center;justify-content:space-between;padding:0 1px 0 2px;font-size:11.300px;letter-spacing:-.4px;white-space:nowrap;overflow:hidden}
.box em{line-height:18px;overflow:hidden;max-width:118px}
.box+.box{width:42px}
.box+.box em{letter-spacing:0}
.f2{display:grid;grid-template-columns:20px 21px 20px 21px 22px 32px;align-items:center;justify-items:center;height:20px;font-size:12px;color:#222}
.it{font-style:italic;font-family:"Liberation Serif",serif;font-size:14px}
.sh{text-shadow:1px 1px 1px #888}
.f2 s{font-size:11px}
.f2 .rw{gap:1px}
.av{font-size:11px;fill:#222}
.f3{display:grid;grid-template-columns:20px 14px 21px 10px 34px 7px 21px 21px 24px;align-items:center;justify-items:center;height:24px}
.ga{font-size:13px;fill:#333}.gl{font-size:15px;fill:#333}.gm{font-size:13px;fill:#333}
.aa{display:flex;align-items:center;font-size:12px;letter-spacing:.5px}
.vs{width:1px;height:19px;background:#a5a29f}
.g-font footer{width:100%;padding:0 3px 0 66px}
.g-para{width:151px;padding-left:7px}
.p1,.p2,.p3{display:grid;align-items:center;justify-items:center}
.p1{grid-template-columns:33px 20px 14px 7px 17px 10px 26px 6px;height:21px}
.p2{grid-template-columns:20px 22px 4px 21px 4px 35px 16px 11px;height:22px}
.p3{grid-template-columns:20px 21px 21px 21px 23px 16px 11px;height:22px;margin-top:1px}
.hl{background:#9f9c99;border:1px solid #7b7977;width:100%;height:21px;display:flex;align-items:center;justify-content:center;gap:4px}
.g-para footer{padding:0 3px 0 37px}
.g-box{width:49px;align-items:center}
.g-box+.g-box{width:50px}
.sq{width:28px;height:28px;border:1px solid #7b7977;background:#c9c6c3;display:flex;align-items:center;justify-content:center}
.g-box>.sq{margin-top:-1px}
.g-box>span{margin:3px 0 2px;line-height:15px}
.g-one{padding-top:4px;width:53px}
.g-one+.g-one{width:97px}
.g-one+.g-one+.g-one{width:87px}
.g-one+.g-one+.g-one+.g-one{width:74px}
.collapse{position:absolute;right:7px;bottom:2px}

.work{height:457px;background:linear-gradient(#4a4a4a,#666 4px);display:flex;overflow:hidden;flex:none}
.thumbs{width:207px;display:flex;flex-direction:column;gap:19.700px;padding:17px 0 0 4px;overflow:hidden}
.row{display:flex;height:88px;flex:none}
.row>span{width:28.500px;font-size:13.500px;line-height:14px;margin-top:-4px;color:#ececec;letter-spacing:-.5px}
.th{width:156px;height:88px;background:#fff;overflow:hidden}
.sel .th{outline:3px solid #e8917f}
.th text{font-family:"Noto Sans CJK JP","Noto Sans",sans-serif;text-rendering:geometricPrecision}
.th .h{font-size:3.700px;font-weight:900;fill:#0d6368}
.th .sb{font-size:2.500px;font-weight:900;fill:#0d6368}
.th .m,.m text{font-size:1.900px;fill:#456b6c}
.th .mb,.mb text{font-size:2px;font-weight:700;fill:#1d6669}
.th .m .l{fill:#2b57a8;text-decoration:underline;font-weight:700}
.th .m .wt{fill:#fff}
.sb1,.sb2{width:15px;background:#454545;display:flex;flex-direction:column}
.sb1>*,.sb2>*{flex:none}
.ar{width:15px;height:15px;background:#dcdcdc;display:flex;align-items:center;justify-content:center}
.ar::before{content:"";border:4px solid transparent;border-bottom-color:#222;border-top:0}
.ar.dn::before{transform:rotate(180deg)}
.thumb{width:15px;background:#c9c9c9}
.sb1 .thumb{height:89px;margin-top:253px}
.sb1 .dn{margin-top:84px}
.split{width:4px;background:#5a5a5a;border-right:1px solid #858585}
main{flex:1;display:flex;flex-direction:column}
.stage{height:416px;display:flex;justify-content:space-between;padding:0 1px 0 111px;border-bottom:1px solid #858585}
.sb2{height:365px}
.sb2 .thumb{height:16px;margin-top:252px}
.sb2 .dn{margin-top:67px}
.sb2>svg{margin:2px 0 0 2px}
.slide{position:relative;width:710px;height:399px;margin-top:7px;background:#fff;padding:23px 0 0 19px;font-family:"Noto Sans CJK JP","Noto Sans",sans-serif;color:#00696e;flex:none;white-space:nowrap}
.slide h1{margin:0;font-size:17.200px;font-weight:900;line-height:24px;letter-spacing:-.38px}
.slide h2{margin:15px 0 0;font-size:11.700px;font-weight:700;line-height:20px;letter-spacing:-.14px}
.slide h2.jeux{letter-spacing:-.5px}
.slide ul{list-style:none;margin:0;padding:0;font-size:8.700px;line-height:16.500px}
.slide li{padding-left:16px}
.slide li::before{content:"•";float:left;margin-left:-16px}
.slide a{color:#4a70b8;text-decoration:underline}
.sp{text-decoration:underline dotted #d8586a 1px;text-underline-offset:2px}
mark{background:#b5b5b5;color:#4f7d7f;padding:4px 0}
.slide h2.env{margin-top:9px}
table{border-collapse:separate;border-spacing:0;width:544px;margin:14px 0 0 5px;table-layout:fixed}
.ca{width:175px}
th{height:17px;background:#7b7b7b;color:#fff;font:bold 10.400px/12px "Liberation Sans",sans-serif;padding:0 0 5px;border-right:1px solid #fff}
td{height:21.300px;padding:0;font-size:8.100px;line-height:12px;background:#e6eaea;border-top:2px solid #fff;vertical-align:top}
.d td{background:#cbd6d6}
td:first-child{text-align:center;border-right:1px solid #fff;font-family:"Liberation Sans",sans-serif;font-size:8.500px;color:#111;letter-spacing:-.2px;padding-top:3px}
td+td{padding-left:16px}
.class{position:absolute;left:11px;bottom:2px;font-size:6.500px;line-height:12px;color:#222}
.logo{position:absolute;right:5px;bottom:6px}
.selbox{position:absolute;left:7px;top:21px}
.cursor{position:absolute;left:248px;top:257px}
.notes{padding:4px 0 0 9px;font-size:13.500px;line-height:20px;color:#e6e6e6;letter-spacing:-.34px}

.status{height:20px;background:#bfbbb7;display:grid;grid-template-columns:98px 22px 93px 20px 209px 19px 88px 232px 17px 27px 14px 37px 36px 37px 37px 130px 32px 16px;padding-left:7px;align-items:center;justify-items:start;font-size:10px;letter-spacing:-.3px;white-space:nowrap;flex:none;overflow:hidden}
.status>svg{justify-self:center}
.status>.zoom{justify-self:start}
.s2{padding-left:11px}
.status .s2,.status .s4{letter-spacing:-.42px}
.status .s3{letter-spacing:-.46px}
.status .cur{width:37px;height:20px;background:#a19e9b;display:flex;align-items:center;justify-content:center}
.taskbar{height:28px;background:linear-gradient(90deg,#22363f,#1d3647 60%,#1c2440);display:grid;grid-template-columns:44px 264px 44px 50px 45px 46px 46px 45px 46px 46px 45px 126px 28px 48px 20px 24px 20px 24px 22px 22px 70px 38px 17px;align-items:end;justify-items:center;overflow:hidden;flex:none}
.taskbar>*{height:28px}
.taskbar>svg{height:auto;align-self:center;margin-top:7px}
.start{display:flex;align-items:center;padding-top:7px}
.search{width:264px;background:#f2f2f2;display:flex;align-items:center;gap:10px;padding:6px 0 0 11px;color:#444;font-size:13.500px;letter-spacing:-.2px;white-space:nowrap}
.pp{width:45px;background:#475a66;display:flex;align-items:center;justify-content:center;padding-top:7px}
.ic{font-size:9.500px;font-weight:700;fill:#fff}
.n1{font-size:7.500px;fill:#fff}
.temp{color:#f2f2f2;font-size:12.300px;line-height:35px;letter-spacing:-.2px;justify-self:start;padding-left:4px}
.clock{color:#f2f2f2;font-size:10.500px;line-height:16px;letter-spacing:-.2px;display:flex;flex-direction:column;align-items:center;padding-top:1px}
.peek{width:1px;background:#6b7486}
.speaker{position:absolute;left:0;top:662px;width:118px;height:36px;border-radius:0 6px 6px 0;background:rgba(18,18,18,.72);color:#f6f6f6;font-size:17.300px;line-height:35px;padding-right:9px;letter-spacing:-.1px;white-space:nowrap;display:flex;justify-content:flex-end;overflow:hidden}
```
